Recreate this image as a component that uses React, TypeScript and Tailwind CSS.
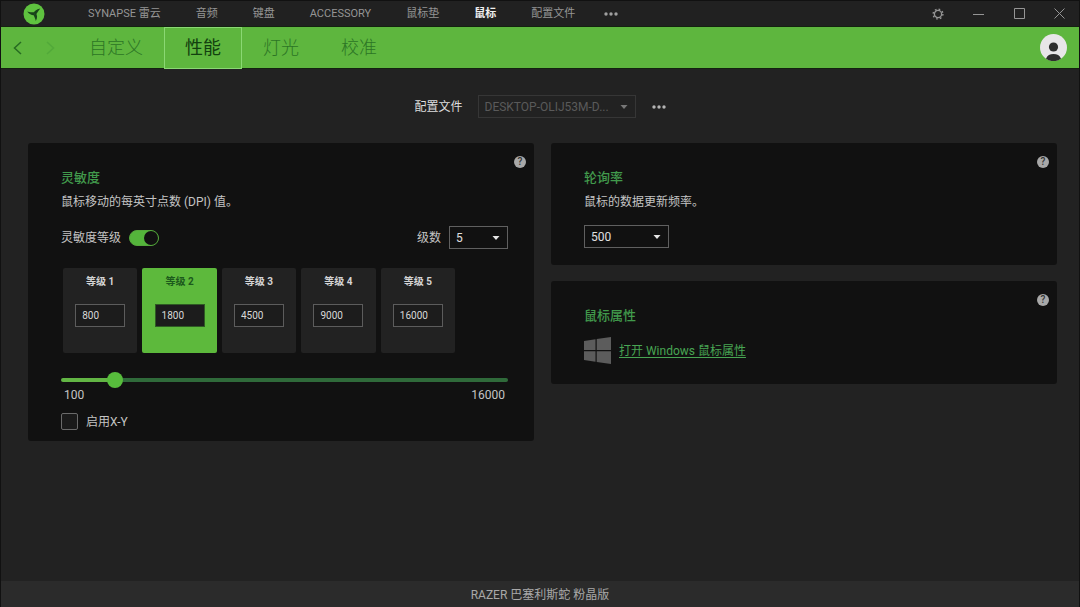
import { useState, type ReactNode } from "react";

const NAV_ITEMS = ["SYNAPSE 雷云", "音频", "键盘", "ACCESSORY", "鼠标垫", "鼠标", "配置文件"];
const TABS = ["自定义", "性能", "灯光", "校准"];
const LEVELS = [800, 1800, 4500, 9000, 16000];
const DPI_MIN = 100;
const DPI_MAX = 16000;

function Logo() {
  return (
    <svg viewBox="0 0 22 22" className="size-[22px]" aria-hidden="true">
      <circle cx="11" cy="11" r="10.5" fill="#5fc23f" />
      <g fill="#17431a">
        <path d="M11.8 12.2 C9 12.6 6.600 11.600 4.200 8.600 C7 9.600 8.800 9 11 9.200 Z" />
        <path d="M10.600 10.600 C11 8.200 13.200 6.400 17.400 5.600 C15.400 7.400 14.600 9.600 13 11.400 Z" />
        <path d="M12.800 10.200 C14.400 12.200 14.600 14.800 12.800 18 C12.400 15.600 11.200 13.800 10.600 11.800 Z" />
      </g>
    </svg>
  );
}

function Dots() {
  return (
    <svg viewBox="0 0 14 4" className="h-1 w-3.5" fill="currentColor" aria-hidden="true">
      <circle cx="2" cy="2" r="1.7" />
      <circle cx="7" cy="2" r="1.7" />
      <circle cx="12" cy="2" r="1.7" />
    </svg>
  );
}

function GearIcon() {
  return (
    <svg viewBox="0 0 12 12" className="size-3" fill="none" stroke="currentColor" aria-hidden="true">
      <circle cx="6" cy="6" r="3.6" strokeWidth="1.3" />
      <circle cx="6" cy="6" r="4.9" strokeWidth="1.4" strokeDasharray="1.7 2.15" />
    </svg>
  );
}

function HelpButton() {
  return (
    <button
      type="button"
      aria-label="帮助"
      className="absolute top-[13px] right-2 flex size-3 items-center justify-center rounded-full bg-[#a8a8a8] text-[10px] leading-3 font-medium text-[#333333]"
    >
      ?
    </button>
  );
}

function Card({ title, className, children }: { title: string; className: string; children: ReactNode }) {
  return (
    <section className={`relative rounded-[3px] bg-[#111111] pt-[25px] pr-[26px] pl-[33px] ${className}`}>
      <HelpButton />
      <h2 className="text-[13px] leading-5 font-medium text-[#419a4c]">{title}</h2>
      {children}
    </section>
  );
}

type SelectBoxProps = {
  id: string;
  options: string[];
  className: string;
  selectClass: string;
  label?: string;
  disabled?: boolean;
};

function SelectBox({ id, options, className, selectClass, label, disabled }: SelectBoxProps) {
  return (
    <div className={`relative ${className}`}>
      <select
        id={id}
        aria-label={label}
        disabled={disabled}
        className={`block h-[23px] w-full appearance-none truncate border bg-transparent pr-5 text-[12px] outline-none ${selectClass}`}
      >
        {options.map((o) => (
          <option key={o} className="bg-[#111111]">
            {o}
          </option>
        ))}
      </select>
      <svg
        viewBox="0 0 8 4"
        className={`pointer-events-none absolute top-[10px] right-2 h-1 w-2 ${disabled ? "text-[#777777]" : "text-[#e6e6e6]"}`}
        fill="currentColor"
        aria-hidden="true"
      >
        <path d="M0.5 0h7L4 4z" />
      </svg>
    </div>
  );
}

export default function App() {
  const [active, setActive] = useState(1);
  const [dpi, setDpi] = useState(LEVELS);
  const value = dpi[active];
  const fill = ((value - DPI_MIN) / (DPI_MAX - DPI_MIN)) * 100;

  const changeDpi = (index: number, next: number) =>
    setDpi(dpi.map((v, i) => (i === index ? next : v)));

  return (
    <div className="flex min-h-screen flex-col border-x border-t border-[#111111] bg-[#222222] font-['Roboto','Noto_Sans_CJK_SC',sans-serif] text-[12px] leading-4 text-[#c4c4c4]">
      <header className="flex h-[26px] items-center border-b border-[#142210] bg-[#212121] pl-[22px] text-[11px] text-[#959595]">
        <Logo />
        <nav className="ml-[43px] flex items-center gap-[35px] pt-px">
          {NAV_ITEMS.map((item) => (
            <a
              key={item}
              href="#"
              className={item === "鼠标" ? "font-bold whitespace-nowrap text-[#f0f0f0]" : "whitespace-nowrap"}
            >
              {item}
            </a>
          ))}
        </nav>
        <button type="button" aria-label="更多" className="ml-[29px] text-[#a0a0a0]">
          <Dots />
        </button>
        <div className="ml-auto flex text-[#959595]">
          <button type="button" aria-label="设置" className="flex h-6 w-10 items-center justify-center">
            <GearIcon />
          </button>
          <button type="button" aria-label="最小化" className="flex h-6 w-[41px] items-center justify-center">
            <svg viewBox="0 0 11 11" className="size-[11px]" stroke="currentColor" aria-hidden="true">
              <path d="M0 6.5h11" />
            </svg>
          </button>
          <button type="button" aria-label="最大化" className="flex h-6 w-10 items-center justify-center">
            <svg viewBox="0 0 11 11" className="size-[11px]" fill="none" stroke="currentColor" aria-hidden="true">
              <path d="M0.5 0.5h10v10h-10z" />
            </svg>
          </button>
          <button type="button" aria-label="关闭" className="flex h-6 w-10 items-center justify-center">
            <svg viewBox="0 0 11 11" className="size-[11px]" stroke="currentColor" aria-hidden="true">
              <path d="M0.5 0.5l10 10M10.5 0.5l-10 10" />
            </svg>
          </button>
        </div>
      </header>

      <div className="flex h-[42px] items-center border-b border-[#142210] bg-[#5eb63e]">
        <button type="button" aria-label="后退" className="ml-3 text-[#276b22]">
          <svg viewBox="0 0 9 14" className="h-3.5 w-[9px]" fill="none" stroke="currentColor" strokeWidth="1.5" aria-hidden="true">
            <path d="M8 1L1.5 7L8 13" />
          </svg>
        </button>
        <button type="button" aria-label="前进" disabled className="ml-6 text-[#52a93a]">
          <svg viewBox="0 0 9 14" className="h-3.5 w-[9px]" fill="none" stroke="currentColor" strokeWidth="1.5" aria-hidden="true">
            <path d="M1 1L7.5 7L1 13" />
          </svg>
        </button>
        <nav className="ml-[13px] flex">
          {TABS.map((tab) => (
            <a
              key={tab}
              href="#"
              className={
                tab === "性能"
                  ? "flex h-[42px] items-center border border-[#8ad873] px-5 pt-px text-[18px] text-[#12400f]"
                  : "flex h-[42px] items-center border border-transparent px-5 pt-px text-[18px] font-light text-[#2c7525]"
              }
            >
              {tab}
            </a>
          ))}
        </nav>
        <button type="button" aria-label="账户" className="mr-3 ml-auto">
          <svg viewBox="0 0 27 27" className="size-[27px]" aria-hidden="true">
            <circle cx="13.5" cy="13.5" r="13.5" fill="#e8e6e8" />
            <circle cx="13.5" cy="13" r="4.6" fill="#2e2e2e" />
            <path d="M6 24.7C7.2 21.4 10 20 13.5 20s6.300 1.400 7.500 4.700A13.500 13.500 0 0 1 6 24.700z" fill="#2e2e2e" />
          </svg>
        </button>
      </div>

      <main className="flex-1 pr-[22px] pb-6 pl-[27px]">
        <div className="flex items-center justify-center pt-[26px] pr-[5px]">
          <label htmlFor="profile" className="text-[#dddddd]">
            配置文件
          </label>
          <SelectBox
            id="profile"
            options={["DESKTOP-OLIJ53M-D..."]}
            disabled
            className="ml-[15px] w-[158px]"
            selectClass="border-[#363636] pl-1.5 text-[#5a5a5a] opacity-100"
          />
          <button type="button" aria-label="配置文件选项" className="ml-4 text-[#b4b4b4]">
            <Dots />
          </button>
        </div>

        <div className="mt-[25px] grid grid-cols-2 items-start gap-[17px]">
          <Card title="灵敏度" className="pb-[11px]">
            <p className="mt-1.5">鼠标移动的每英寸点数 (DPI) 值。</p>
            <div className="mt-4 flex items-center">
              <label htmlFor="stages">灵敏度等级</label>
              <input
                id="stages"
                type="checkbox"
                role="switch"
                defaultChecked
                className="relative ml-2 h-4 w-[30px] appearance-none rounded-full border border-[#5a5a5a] bg-[#222222] before:absolute before:top-0 before:left-0 before:size-3.5 before:rounded-full before:bg-[#777777] checked:border-[#54a83b] checked:bg-[#54b53b] checked:before:left-3.5 checked:before:bg-[#111111]"
              />
              <label htmlFor="count" className="mr-2 ml-auto">
                级数
              </label>
              <SelectBox
                id="count"
                options={["5", "4", "3", "2", "1"]}
                className="w-[59px]"
                selectClass="border-[#606060] pl-1.5 text-[#e0e0e0]"
              />
            </div>

            <div className="mt-[19px] ml-[2px] grid w-[392px] max-w-full grid-cols-5 gap-[5px]">
              {dpi.map((v, i) => (
                <div
                  key={i}
                  onClick={() => setActive(i)}
                  className={`flex h-[85px] flex-col items-center rounded-[2px] pt-1.5 ${i === active ? "bg-[#5db93c]" : "bg-[#222222]"}`}
                >
                  <label
                    htmlFor={`level-${i}`}
                    className={`text-[10px] leading-4 font-bold ${i === active ? "text-[#1c5a1c]" : "text-[#d4d4d4]"}`}
                  >
                    等级 {i + 1}
                  </label>
                  <input
                    id={`level-${i}`}
                    type="text"
                    value={v}
                    onChange={(e) => changeDpi(i, Number(e.target.value) || 0)}
                    className={`mt-3.5 h-[23px] w-[50px] border bg-[#1c1c1c] px-1.5 text-[10px] text-[#d8d8d8] outline-none ${i === active ? "border-[#2f5a24]" : "border-[#5c5c5c]"}`}
                  />
                </div>
              ))}
            </div>

            <input
              type="range"
              aria-label="DPI"
              min={DPI_MIN}
              max={DPI_MAX}
              step={50}
              value={value}
              onChange={(e) => changeDpi(active, Number(e.target.value))}
              style={{
                backgroundImage: `linear-gradient(to right, #62b544 ${fill}%, #2f6a3a ${fill}%)`,
              }}
              className="mt-[25px] block h-1 w-full appearance-none rounded-full [&::-webkit-slider-thumb]:size-4 [&::-webkit-slider-thumb]:appearance-none [&::-webkit-slider-thumb]:rounded-full [&::-webkit-slider-thumb]:bg-[#57bd3c]"
            />
            <div className="mt-[5px] flex justify-between px-[3px]">
              <span>{DPI_MIN}</span>
              <span>{DPI_MAX}</span>
            </div>
            <div className="mt-2.5 flex items-center gap-2">
              <input
                id="xy"
                type="checkbox"
                className="size-[17px] appearance-none rounded-[2px] border border-[#6a6a6a] bg-[#1a1a1a] checked:bg-[#5db93c]"
              />
              <label htmlFor="xy">启用X-Y</label>
            </div>
          </Card>

          <div className="flex flex-col gap-4">
            <Card title="轮询率" className="pb-[17px]">
              <p className="mt-1.5">鼠标的数据更新频率。</p>
              <SelectBox
                id="polling"
                label="轮询率"
                options={["500", "125", "1000"]}
                className="mt-[15px] w-[85px]"
                selectClass="border-[#606060] pl-1.5 text-[#e0e0e0]"
              />
            </Card>
            <Card title="鼠标属性" className="pb-5">
              <div className="mt-[11px] flex items-center gap-2">
                <svg viewBox="0 0 27 27" className="size-[27px]" fill="#5c5c5c" aria-hidden="true">
                  <path d="M0 4L11.500 2.300V13H0zM12.700 2.100L27 0V13H12.700zM0 14.200H11.500V24.700L0 23zM12.700 14.200H27V27L12.700 24.900z" />
                </svg>
                <a href="#" className="text-[#48a553] underline underline-offset-2">
                  打开 Windows 鼠标属性
                </a>
              </div>
            </Card>
          </div>
        </div>
      </main>

      <footer className="flex h-[26px] items-center justify-center bg-[#2b2b2b] pt-px text-[#a8a8a8]">
        RAZER 巴塞利斯蛇 粉晶版
      </footer>
    </div>
  );
}
